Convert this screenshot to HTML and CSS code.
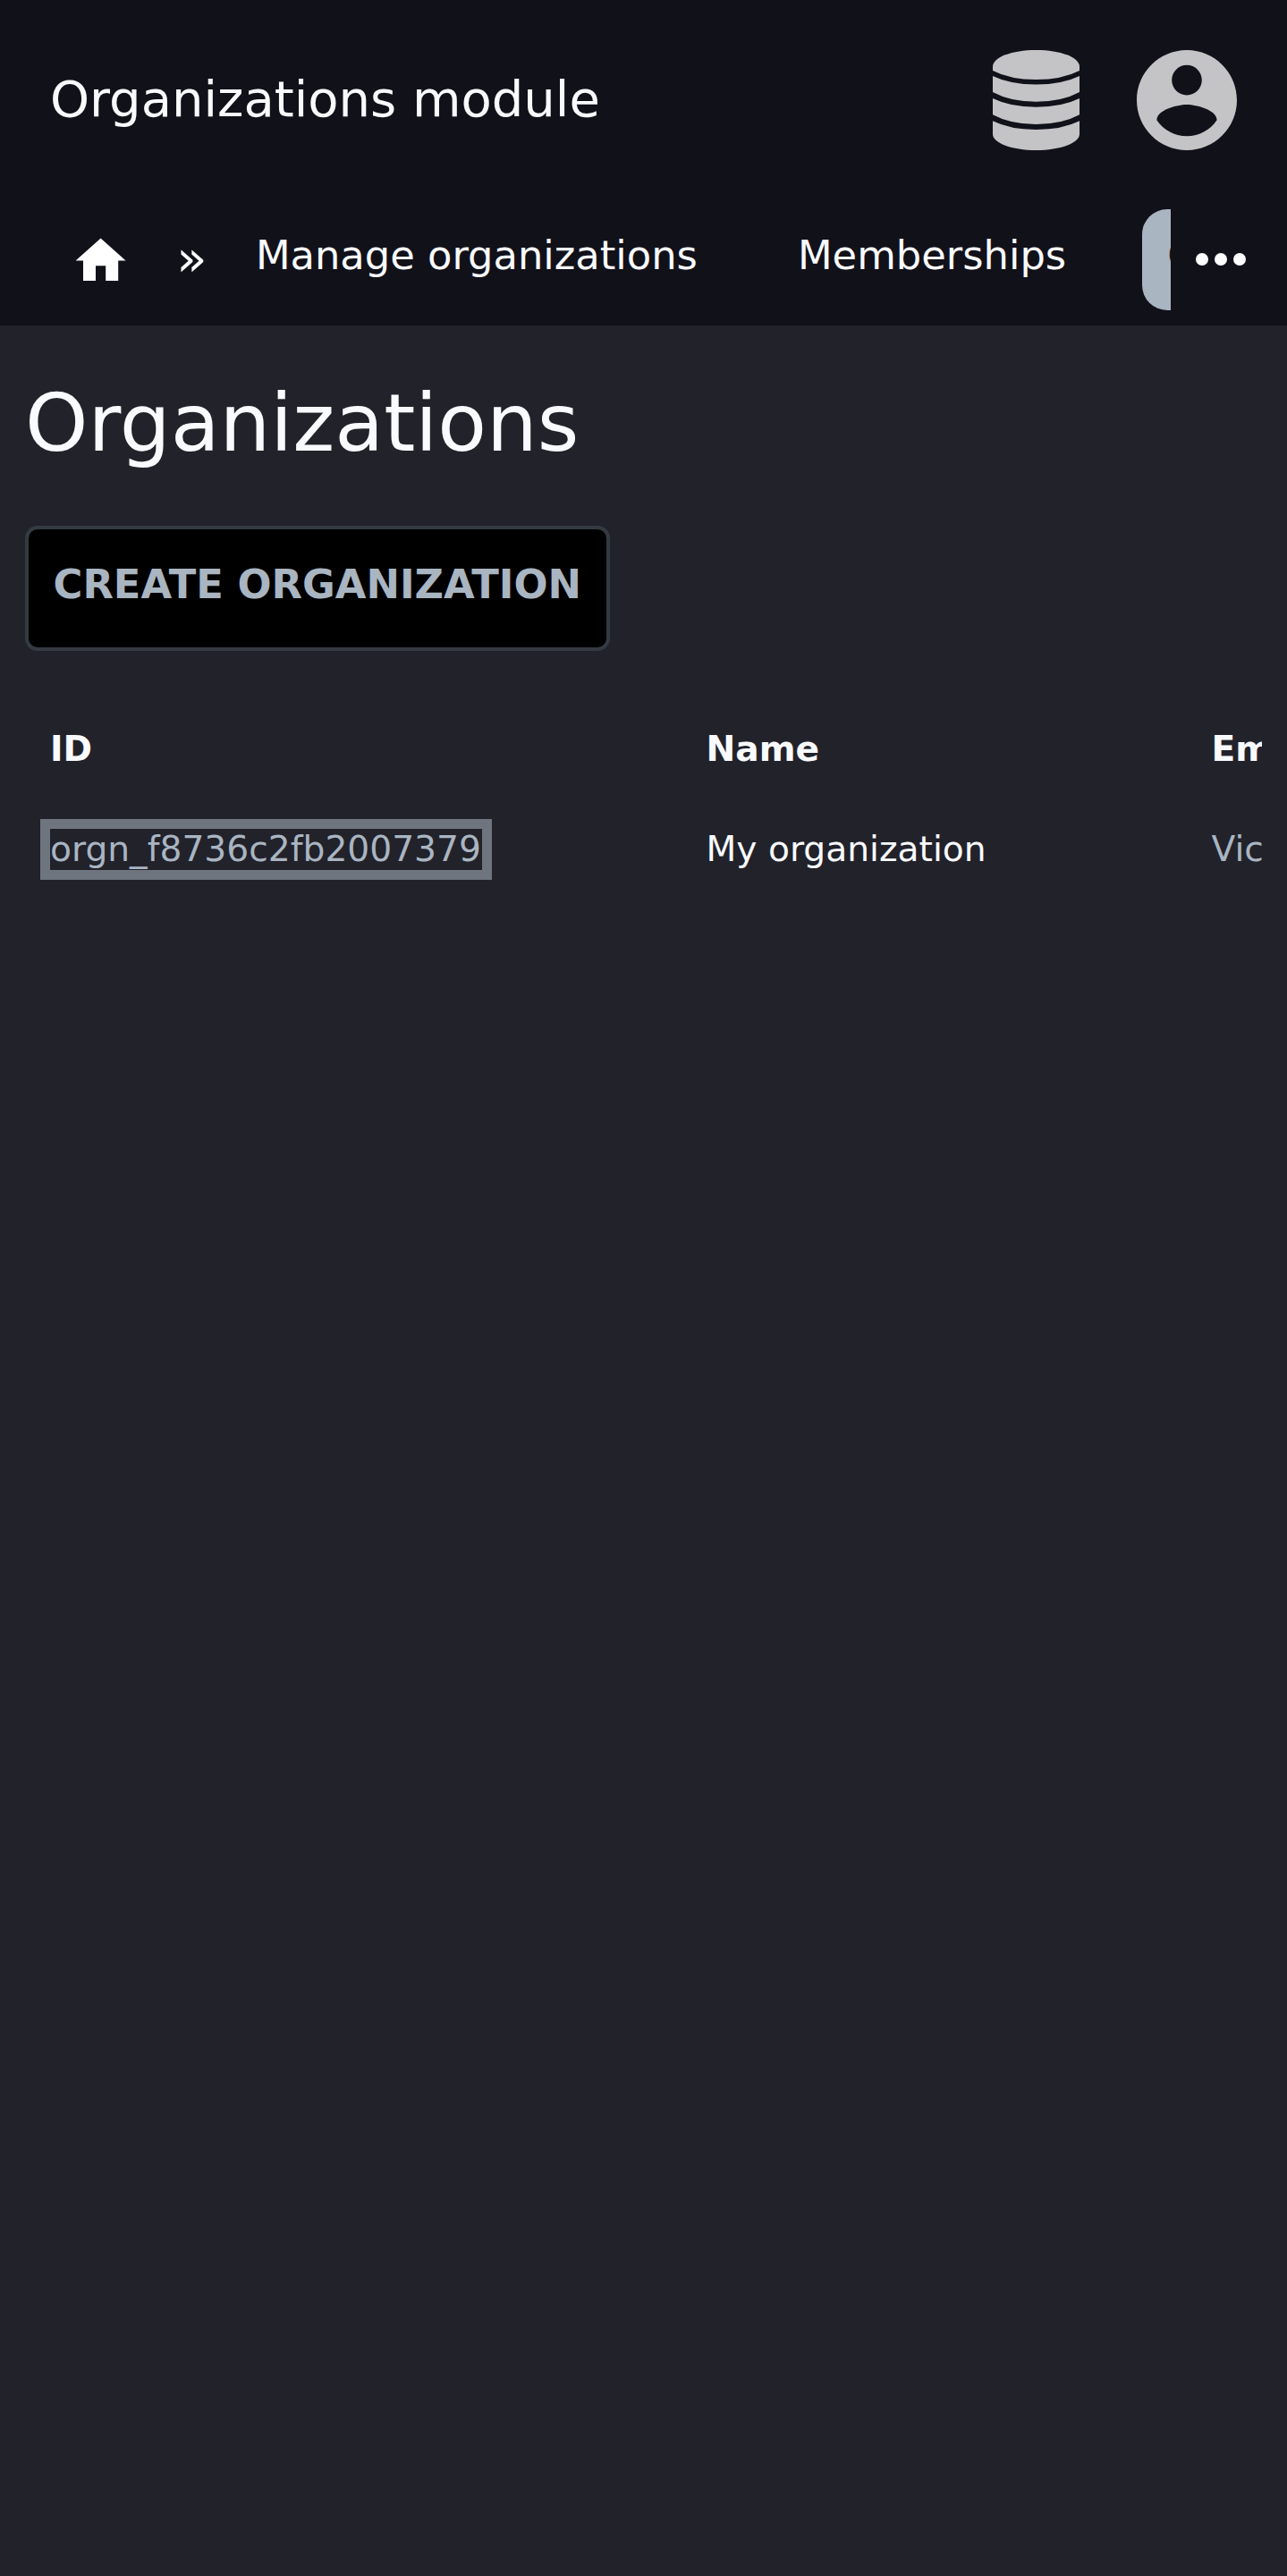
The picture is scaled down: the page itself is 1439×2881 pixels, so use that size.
FILE: index.html
```html
<!DOCTYPE html>
<html lang="en">
<head>
<meta charset="utf-8">
<title>Organizations module</title>
<link rel="stylesheet" href="styles.css">
</head>
<body>
<header class="header">
  <div class="topbar">
    <span class="brand">Organizations module</span>
    <div class="actions">
      <svg class="action-icon" viewBox="0 0 112 112" aria-hidden="true">
        <path d="M7 18.500C7 8 28.500 0 55.500 0s48.500 8 48.500 18.500V23Q84.500 33 55.500 33T7 23z"/>
        <path d="M7 29Q26.500 38.500 55.500 38.500T104 29V47Q84.500 57.700 55.500 57.700T7 47z"/>
        <path d="M7 54Q26.500 63.700 55.500 63.700T104 54V72.300Q84.500 83 55.500 83T7 72.300z"/>
        <path d="M7 79.300Q26.500 89 55.500 89T104 79.300V94C104 104 82.500 112 55.500 112S7 104 7 94z"/>
      </svg>
      <svg class="action-icon" viewBox="2 2 20 20" aria-hidden="true">
        <path d="M12 2C6.480 2 2 6.480 2 12s4.480 10 10 10 10-4.480 10-10S17.520 2 12 2zm0 3c1.660 0 3 1.340 3 3s-1.340 3-3 3-3-1.340-3-3 1.340-3 3-3zm0 14.200c-2.500 0-4.710-1.280-6-3.220.030-1.990 4-3.080 6-3.080 1.990 0 5.970 1.090 6 3.080-1.290 1.940-3.500 3.220-6 3.220z"/>
      </svg>
    </div>
  </div>
  <nav class="navbar">
    <div class="nav-items">
      <svg class="home" viewBox="0 0 24 24" aria-hidden="true"><path d="M10 20v-6h4v6h5v-8h3L12 3 2 12h3v8z"/></svg>
      <span class="separator">»</span>
      <a class="nav-link">Manage organizations</a>
      <a class="nav-link">Memberships</a>
      <a class="nav-link nav-link-active">Organizations</a>
    </div>
    <svg class="more" viewBox="0 0 24 24" aria-hidden="true"><circle cx="6" cy="12" r="2"/><circle cx="12" cy="12" r="2"/><circle cx="18" cy="12" r="2"/></svg>
  </nav>
</header>
<main class="content">
  <h1 class="heading">Organizations</h1>
  <button class="create">CREATE ORGANIZATION</button>
  <div class="table-scroll">
    <table class="table">
      <thead><tr><th class="col-id">ID</th><th class="col-name">Name</th><th class="col-view">Employees</th></tr></thead>
      <tbody><tr><td><a class="link link-focused">orgn_f8736c2fb2007379</a></td><td>My organization</td><td><a class="link">Vic</a></td></tr></tbody>
    </table>
  </div>
</main>
</body>
</html>
```
FILE: styles.css
```css
* { box-sizing: border-box; }
body {
  margin: 0;
  min-height: 2881px;
  background: #22222b;
  color: #f9fafd;
  font-family: "DejaVu Sans", sans-serif;
  overflow: hidden;
}
.header { height: 364px; background: #11111a; }
.topbar {
  display: flex;
  align-items: center;
  justify-content: space-between;
  height: 224px;
  padding: 0 56px;
}
.brand { padding-bottom: 2px; font-size: 56px; line-height: 84px; }
.actions { display: flex; gap: 56px; }
.action-icon { width: 112px; height: 112px; fill: #c4c4c6; }
.navbar { display: flex; height: 140px; }
.nav-items {
  display: flex;
  flex: none;
  align-items: flex-start;
  width: 1309px;
  padding: 10px 0 0 79px;
  overflow: hidden;
  white-space: nowrap;
}
.home { flex: none; width: 67.2px; height: 67.2px; margin-top: 24px; fill: #fff; }
.separator {
  flex: none;
  width: 34.3px;
  margin: 0 26.4px 0 51px;
  font-size: 56px;
  line-height: 109px;
}
.nav-link {
  flex: none;
  height: 112.5px;
  margin-right: 56px;
  padding: 0 28px;
  border-radius: 28px;
  font-size: 44.8px;
  line-height: 103px;
}
.nav-link-active { margin-left: 1px; background: #a9b5c1; color: #11111a; }
.more { flex: none; width: 84px; height: 84px; margin: 24px 0 0 14px; fill: #fff; }
.content { padding: 56px 28px 0; }
.heading { margin: 0; font-size: 89.6px; font-weight: 400; line-height: 106px; }
.create {
  display: block;
  height: 140px;
  margin: 62px 0 0;
  padding: 0 27.5px 9px;
  border: 4px solid #343a41;
  border-radius: 14px;
  background: #000;
  color: #a9b5c1;
  font: bold 44.8px "DejaVu Sans", sans-serif;
}
.table-scroll { margin-top: 53px; overflow: hidden; }
.table { width: 1700px; border-collapse: collapse; table-layout: fixed; font-size: 39.2px; }
.table th, .table td { height: 112px; padding: 0 28px; text-align: left; white-space: nowrap; }
.col-id { width: 733.5px; }
.col-name { width: 565px; }
.link { color: #a9b5c1; }
.link-focused { padding: 0 1px 1px 0; outline: 11px solid #6e757e; }
```
